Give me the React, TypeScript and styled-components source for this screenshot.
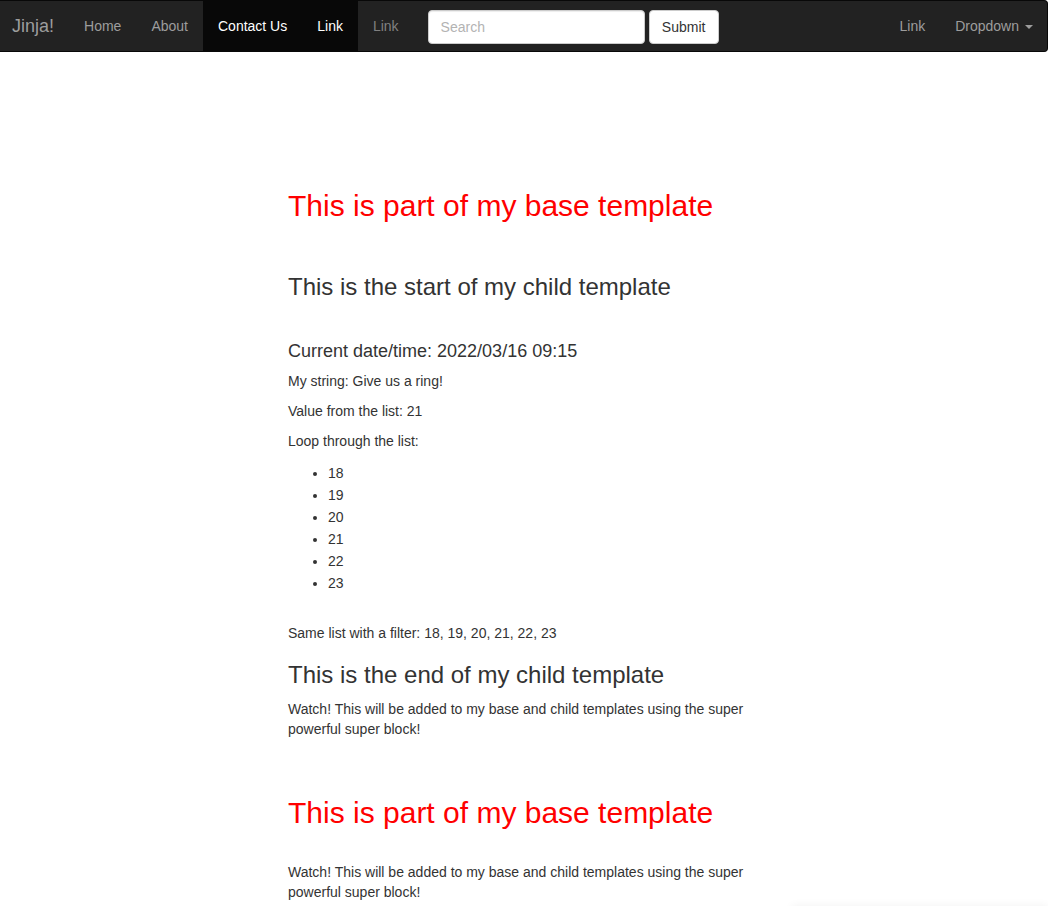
import React from 'react'
import styled, { createGlobalStyle } from 'styled-components'

const GlobalStyle = createGlobalStyle`
  html, body {
    margin: 0;
    padding: 0;
    background: #fff;
  }
  body {
    font-family: "Liberation Sans", Arial, Helvetica, sans-serif;
    font-size: 14px;
    line-height: 20px;
    color: #333;
  }
  * { box-sizing: border-box; }
`

const navLeft = [
  { label: 'Home', state: 'normal' },
  { label: 'About', state: 'normal' },
  { label: 'Contact Us', state: 'active' },
  { label: 'Link', state: 'active' },
  { label: 'Link', state: 'dim' },
]

const numbers = [18, 19, 20, 21, 22, 23]

const App = () => {
  return (
    <>
      <GlobalStyle />
      <Navbar>
        <Brand>Jinja!</Brand>
        <NavList>
          {navLeft.map((item, i) => (
            <NavItem key={i} $state={item.state}>{item.label}</NavItem>
          ))}
        </NavList>
        <SearchForm onSubmit={(e) => e.preventDefault()}>
          <SearchInput type="text" placeholder="Search" />
          <SubmitButton type="submit">Submit</SubmitButton>
        </SearchForm>
        <RightNav>
          <NavItem $state="normal">Link</NavItem>
          <NavItem $state="normal">
            Dropdown <Caret />
          </NavItem>
        </RightNav>
      </Navbar>

      <Main>
        <BaseTitle>This is part of my base template</BaseTitle>
        <ChildTitle>This is the start of my child template</ChildTitle>
        <DateLine>Current date/time: 2022/03/16 09:15</DateLine>
        <Para>My string: Give us a ring!</Para>
        <Para>Value from the list: 21</Para>
        <Para>Loop through the list:</Para>
        <Bullets>
          {numbers.map((n) => (
            <li key={n}>{n}</li>
          ))}
        </Bullets>
        <Para>Same list with a filter: {numbers.join(', ')}</Para>
        <EndTitle>This is the end of my child template</EndTitle>
        <Para>Watch! This will be added to my base and child templates using the super powerful super block!</Para>
        <BaseTitle $again>This is part of my base template</BaseTitle>
        <Para>Watch! This will be added to my base and child templates using the super powerful super block!</Para>
      </Main>
      <CornerShade />
    </>
  )
}

export default App

const Navbar = styled.nav`
  display: flex;
  align-items: stretch;
  height: 52px;
  background-color: #222;
  border: 1px solid #080808;
  border-left: none;
  border-radius: 0 4px 4px 0;
`
const Brand = styled.a`
  display: flex;
  align-items: center;
  padding: 0 15px 0 12px;
  font-size: 18px;
  line-height: 20px;
  color: #9d9d9d;
`
const NavList = styled.div`
  display: flex;
`
const NavItem = styled.a<{ $state: string }>`
  display: flex;
  align-items: center;
  padding: 0 15px;
  font-size: 14px;
  line-height: 20px;
  white-space: nowrap;
  cursor: pointer;
  color: ${(p) => (p.$state === 'active' ? '#fff' : p.$state === 'dim' ? '#808080' : '#9d9d9d')};
  background-color: ${(p) => (p.$state === 'active' ? '#080808' : 'transparent')};
`
const SearchForm = styled.form`
  display: flex;
  align-items: flex-start;
  gap: 4px;
  margin: 0;
  padding: 9px 15px 0 14px;
`
const SearchInput = styled.input`
  width: 217px;
  height: 34px;
  padding: 6px 12px;
  font-family: "Liberation Sans", Arial, sans-serif;
  font-size: 14px;
  color: #555;
  background: #fff;
  border: 1px solid #ccc;
  border-radius: 4px;
  box-shadow: inset 0 1px 1px rgba(0, 0, 0, 0.075);
  outline: none;
  &::placeholder {
    color: #b3b3b3;
  }
`
const SubmitButton = styled.button`
  width: 70px;
  height: 34px;
  padding: 6px 12px;
  font-family: "Liberation Sans", Arial, sans-serif;
  font-size: 14px;
  line-height: 20px;
  color: #333;
  background: #fff;
  border: 1px solid #ccc;
  border-radius: 4px;
`
const RightNav = styled.div`
  display: flex;
  margin-left: auto;
  margin-right: -1px;
`
const Caret = styled.span`
  display: inline-block;
  width: 0;
  height: 0;
  margin-left: 6px;
  margin-top: 2px;
  border-top: 4px solid #9d9d9d;
  border-left: 4px solid transparent;
  border-right: 4px solid transparent;
`
const Main = styled.main`
  width: 476px;
  margin-left: 288px;
  padding-top: 137px;
`
const BaseTitle = styled.h1<{ $again?: boolean }>`
  margin: ${(p) => (p.$again ? '57px 0 33px' : '0 0 52px')};
  font-size: 30px;
  font-weight: 500;
  line-height: 1.1;
  color: #f00;
`
const ChildTitle = styled.h2`
  margin: 0 0 42px;
  font-size: 24px;
  font-weight: 500;
  line-height: 1.1;
`
const DateLine = styled.h4`
  margin: 0 0 9px;
  font-size: 18px;
  font-weight: 500;
  line-height: 1.1;
`
const Para = styled.p`
  margin: 0 0 10px;
`
const Bullets = styled.ul`
  margin: 11px 0 29px;
  padding-left: 40px;
  line-height: 22px;
`
const EndTitle = styled.h3`
  margin: 19px 0 10px;
  font-size: 24px;
  font-weight: 500;
  line-height: 1.1;
`
const CornerShade = styled.div`
  position: fixed;
  right: 0;
  bottom: -30px;
  width: 256px;
  height: 30px;
  background: #fff;
  box-shadow: 0 0 10px rgba(0, 0, 0, 0.06);
`
